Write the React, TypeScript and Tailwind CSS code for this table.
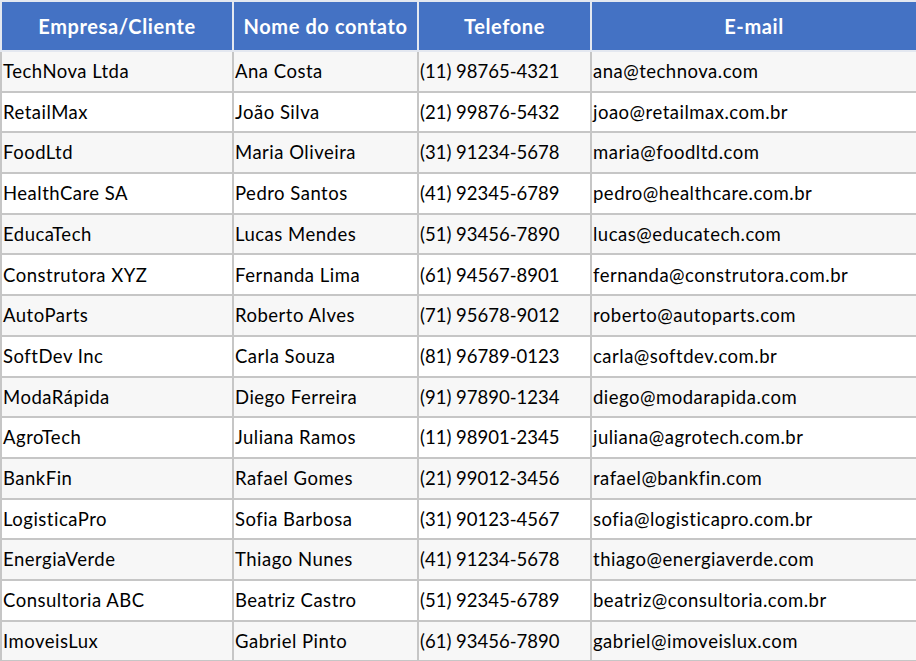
const rows = [
  ["TechNova Ltda", "Ana Costa", "(11) 98765-4321", "ana@technova.com"],
  ["RetailMax", "João Silva", "(21) 99876-5432", "joao@retailmax.com.br"],
  ["FoodLtd", "Maria Oliveira", "(31) 91234-5678", "maria@foodltd.com"],
  ["HealthCare SA", "Pedro Santos", "(41) 92345-6789", "pedro@healthcare.com.br"],
  ["EducaTech", "Lucas Mendes", "(51) 93456-7890", "lucas@educatech.com"],
  ["Construtora XYZ", "Fernanda Lima", "(61) 94567-8901", "fernanda@construtora.com.br"],
  ["AutoParts", "Roberto Alves", "(71) 95678-9012", "roberto@autoparts.com"],
  ["SoftDev Inc", "Carla Souza", "(81) 96789-0123", "carla@softdev.com.br"],
  ["ModaRápida", "Diego Ferreira", "(91) 97890-1234", "diego@modarapida.com"],
  ["AgroTech", "Juliana Ramos", "(11) 98901-2345", "juliana@agrotech.com.br"],
  ["BankFin", "Rafael Gomes", "(21) 99012-3456", "rafael@bankfin.com"],
  ["LogisticaPro", "Sofia Barbosa", "(31) 90123-4567", "sofia@logisticapro.com.br"],
  ["EnergiaVerde", "Thiago Nunes", "(41) 91234-5678", "thiago@energiaverde.com"],
  ["Consultoria ABC", "Beatriz Castro", "(51) 92345-6789", "beatriz@consultoria.com.br"],
  ["ImoveisLux", "Gabriel Pinto", "(61) 93456-7890", "gabriel@imoveislux.com"],
];

const headers = ["Empresa/Cliente", "Nome do contato", "Telefone", "E-mail"];

export default function App() {
  return (
    <div className="w-[916px] h-[661px] overflow-hidden bg-white font-['Lato',sans-serif] text-black">
      <table className="w-[916px] border-collapse table-fixed">
        <colgroup>
          <col className="w-[232px]" />
          <col className="w-[185px]" />
          <col className="w-[173px]" />
          <col className="w-[326px]" />
        </colgroup>
        <thead>
          <tr className="h-[50px]">
            {headers.map((h) => (
              <th
                key={h}
                className="bg-[#4472c4] text-white font-bold text-[20px] tracking-[0.6px] text-center border-2 border-[#e4e8f0] px-1 whitespace-nowrap"
              >
                {h}
              </th>
            ))}
          </tr>
        </thead>
        <tbody>
          {rows.map((r, i) => (
            <tr key={i} className={`h-[40.7px] ${i % 2 === 0 ? "bg-[#f7f7f7]" : "bg-white"}`}>
              {r.map((c, j) => (
                <td
                  key={j}
                  className={`border-2 border-[#c6c6c6] px-[1px] text-[18.5px] leading-none whitespace-nowrap ${
                    j === 2 ? "" : "tracking-[0.5px]"
                  }`}
                >
                  {c}
                </td>
              ))}
            </tr>
          ))}
        </tbody>
      </table>
    </div>
  );
}
